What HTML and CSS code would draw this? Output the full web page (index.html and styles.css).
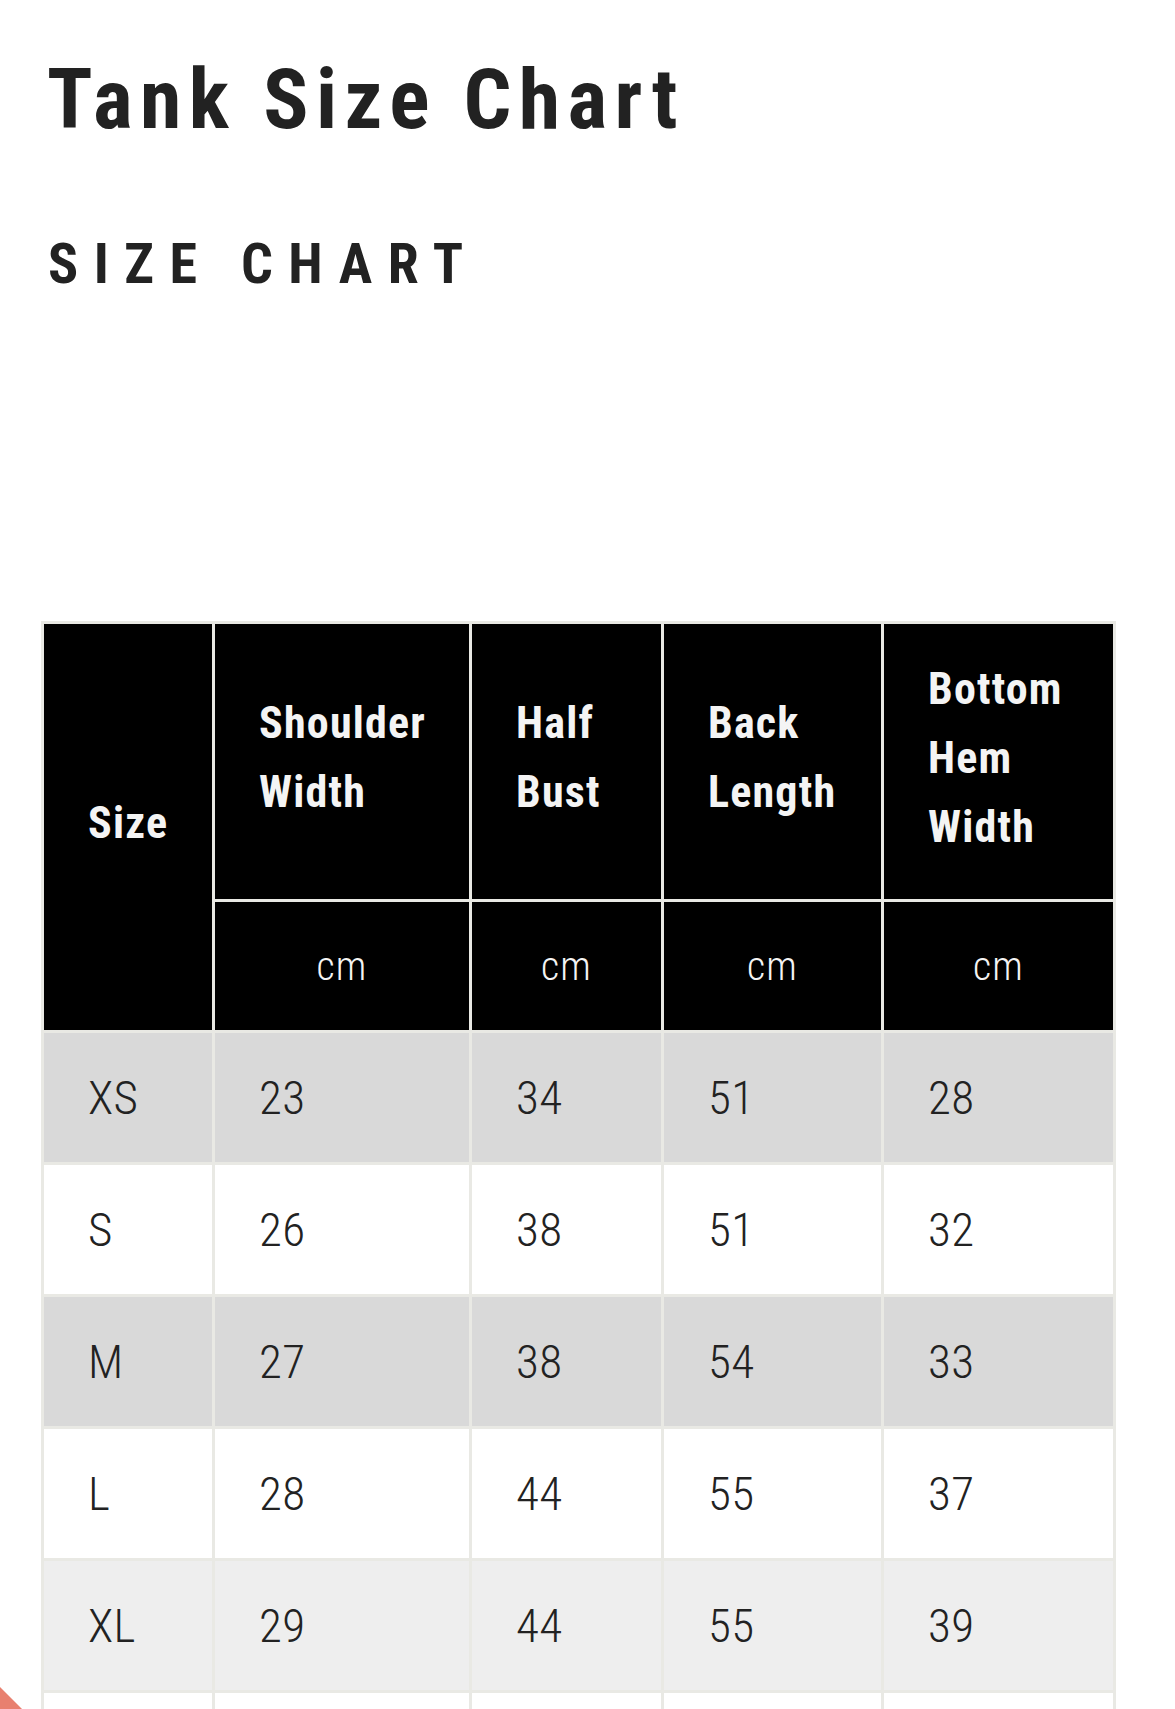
FILE: index.html
```html
<!DOCTYPE html>
<html lang="en">
<head>
<meta charset="utf-8">
<title>Tank Size Chart</title>
<link rel="stylesheet" href="styles.css">
</head>
<body>
<main class="page">
  <h1 class="title">Tank Size Chart</h1>
  <h2 class="subtitle">SIZE CHART</h2>
  <table class="chart">
    <colgroup>
      <col class="c-size"><col class="c-shoulder"><col class="c-bust"><col class="c-back"><col class="c-hem">
    </colgroup>
    <thead>
      <tr class="h-top">
        <th rowspan="2" class="h-size">Size</th>
        <th>Shoulder<br>Width</th>
        <th>Half<br>Bust</th>
        <th>Back<br>Length</th>
        <th>Bottom<br>Hem<br>Width</th>
      </tr>
      <tr class="h-unit">
        <th>cm</th><th>cm</th><th>cm</th><th>cm</th>
      </tr>
    </thead>
    <tbody>
      <tr class="gray"><td>XS</td><td>23</td><td>34</td><td>51</td><td>28</td></tr>
      <tr class="white"><td>S</td><td>26</td><td>38</td><td>51</td><td>32</td></tr>
      <tr class="gray"><td>M</td><td>27</td><td>38</td><td>54</td><td>33</td></tr>
      <tr class="white"><td>L</td><td>28</td><td>44</td><td>55</td><td>37</td></tr>
      <tr class="light"><td>XL</td><td>29</td><td>44</td><td>55</td><td>39</td></tr>
      <tr class="white tail"><td></td><td></td><td></td><td></td><td></td></tr>
    </tbody>
  </table>
</main>
<div class="corner"></div>
</body>
</html>
```
FILE: styles.css
```css
html, body {
  margin: 0;
  padding: 0;
  background: #ffffff;
  overflow: hidden;
}
body {
  width: 1175px;
  height: 1709px;
  position: relative;
  font-family: Roboto, "Liberation Sans", sans-serif;
  color: #222222;
}
.page {
  padding: 50px 0 0 41px;
}
.title {
  margin: 0 0 0 6px;
  font-family: Roboto, "Liberation Sans", sans-serif;
  font-weight: 700;
  font-stretch: 85%;
  font-size: 84px;
  line-height: 100px;
  letter-spacing: 7.4px;
  color: #222222;
}
.subtitle {
  margin: 84px 0 0 7px;
  font-family: Roboto, sans-serif;
  font-weight: 700;
  font-stretch: 85%;
  font-size: 56px;
  line-height: 60px;
  letter-spacing: 15.5px;
  color: #222222;
}
.chart {
  margin-top: 327px;
  border-collapse: collapse;
  table-layout: fixed;
  width: 1072px;
  border: 3px solid #e9e9e4;
}
.c-size { width: 171px; }
.c-shoulder { width: 257px; }
.c-bust { width: 192px; }
.c-back { width: 220px; }
.c-hem { width: 232px; }
.chart th, .chart td {
  border: 3px solid #e9e9e4;
  padding: 0 0 0 44px;
  text-align: left;
  vertical-align: middle;
}
.chart th {
  background: #000000;
  color: #f4f4f4;
  font-family: Roboto, sans-serif;
  font-weight: 700;
  font-stretch: 75%;
  font-size: 44px;
  line-height: 69px;
  letter-spacing: 1.2px;
}
.h-top { height: 278px; }
.chart .h-top th {
  padding-bottom: 7px;
}
.h-unit { height: 131px; }
.chart .h-unit th {
  text-align: center;
  padding: 0;
  font-weight: 300;
  font-size: 40px;
}
.chart td {
  height: 129px;
  font-family: Roboto, sans-serif;
  font-weight: 300;
  font-stretch: 75%;
  font-size: 47px;
  letter-spacing: 0.3px;
  color: #222222;
}
.chart .tail td {
  height: 24px;
  border-bottom: 0;
}
.gray td { background: #d9d9d9; }
.white td { background: #ffffff; }
.light td { background: #eeeeee; }
.corner {
  position: absolute;
  left: 0;
  bottom: 0;
  width: 22px;
  height: 22px;
  background: #e8806f;
  clip-path: polygon(0 0, 100% 100%, 0 100%);
}
```
